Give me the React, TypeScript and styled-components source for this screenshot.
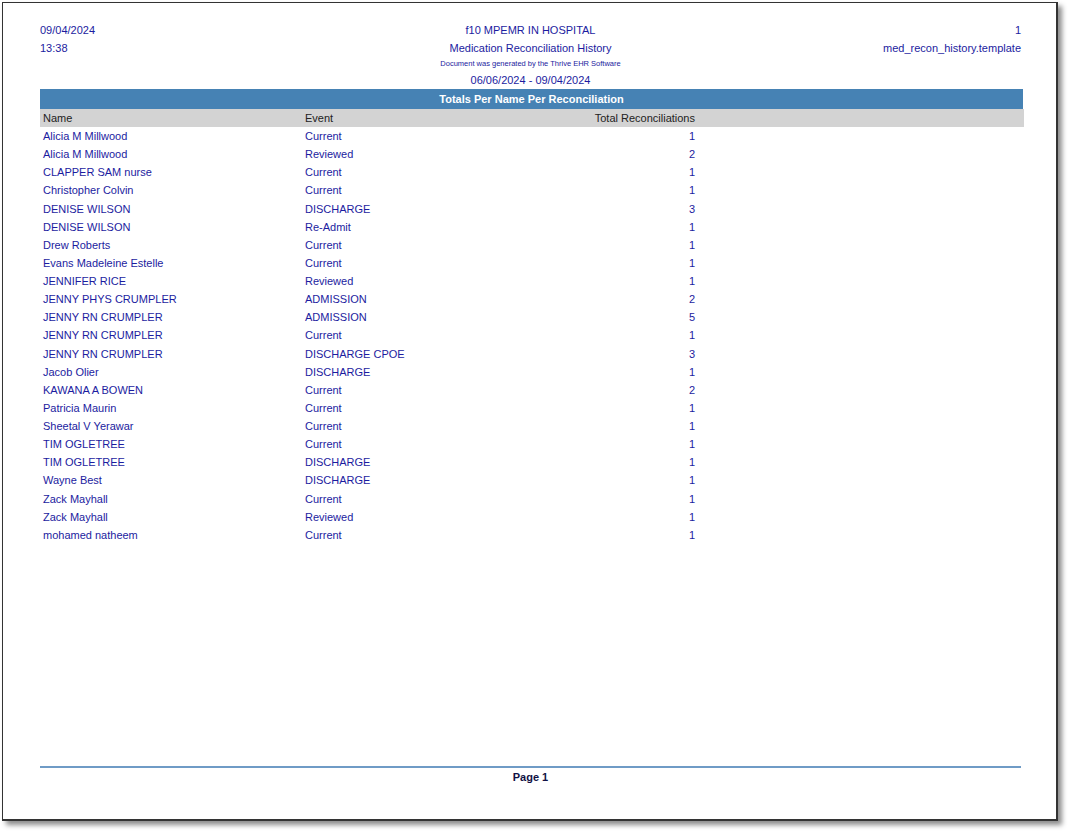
import React from "react";
import styled, { createGlobalStyle } from "styled-components";

const Global = createGlobalStyle`
  html, body { margin: 0; padding: 0; background: #fff; }
  body { font-family: "Liberation Sans", Arial, sans-serif; color: #1c1ca0; }
`;

const Frame = styled.div`
  width: 1072px; height: 836px; box-sizing: border-box; padding: 2px 14px 15px 2px;
`;
const Page = styled.div`
  height: 100%; box-sizing: border-box; border: 1px solid #333; border-right-width: 2px; border-bottom-width: 2px;
  box-shadow: 4px 4px 5px rgba(0,0,0,0.45); background: #fff;
  padding: 18px 35px 0 37px; display: flex; flex-direction: column; font-size: 11px;
`;
const Header = styled.div`
  display: grid; grid-template-columns: 1fr auto 1fr; align-items: start;
`;
const Col = styled.div<{ $align: string }>`
  display: flex; flex-direction: column; align-items: ${p => p.$align}; text-align: ${p => p.$align};
`;
const Line = styled.div<{ $h?: number; $size?: number }>`
  height: ${p => p.$h ?? 18}px; line-height: ${p => p.$h ?? 18}px; font-size: ${p => p.$size ?? 11}px; white-space: nowrap;
`;
const Bar = styled.div`
  margin-top: 0px; height: 20px; background: #4682b4; color: #fff; font-weight: bold; font-size: 11px;
  display: flex; align-items: center; justify-content: center; padding-left: 0; width: 983px;
`;
const Row = styled.div<{ $head?: boolean }>`
  display: grid; grid-template-columns: 262px 200px 190px 1fr; height: ${p => (p.$head ? 18 : 18.14)}px;
  align-items: center; background: ${p => (p.$head ? "#d3d3d3" : "transparent")}; width: 981px;
  color: ${p => (p.$head ? "#222" : "#1c1ca0")}; padding-left: 3px;
`;
const Num = styled.span`text-align: right;`;
const Spacer = styled.div`flex: 1;`;
const Footer = styled.div`
  border-top: 2px solid #6f9bc6; width: 981px; text-align: center; font-weight: bold; font-size: 11px;
  color: #111144; padding-top: 3px; margin-bottom: 36px;
`;

const rows: [string, string, number][] = [
  ["Alicia M Millwood", "Current", 1],
  ["Alicia M Millwood", "Reviewed", 2],
  ["CLAPPER SAM nurse", "Current", 1],
  ["Christopher Colvin", "Current", 1],
  ["DENISE WILSON", "DISCHARGE", 3],
  ["DENISE WILSON", "Re-Admit", 1],
  ["Drew Roberts", "Current", 1],
  ["Evans Madeleine Estelle", "Current", 1],
  ["JENNIFER RICE", "Reviewed", 1],
  ["JENNY PHYS CRUMPLER", "ADMISSION", 2],
  ["JENNY RN CRUMPLER", "ADMISSION", 5],
  ["JENNY RN CRUMPLER", "Current", 1],
  ["JENNY RN CRUMPLER", "DISCHARGE CPOE", 3],
  ["Jacob Olier", "DISCHARGE", 1],
  ["KAWANA A BOWEN", "Current", 2],
  ["Patricia Maurin", "Current", 1],
  ["Sheetal V Yerawar", "Current", 1],
  ["TIM OGLETREE", "Current", 1],
  ["TIM OGLETREE", "DISCHARGE", 1],
  ["Wayne Best", "DISCHARGE", 1],
  ["Zack Mayhall", "Current", 1],
  ["Zack Mayhall", "Reviewed", 1],
  ["mohamed natheem", "Current", 1],
];

export default function App() {
  return (
    <Frame>
      <Global />
      <Page>
        <Header>
          <Col $align="left">
            <Line>09/04/2024</Line>
            <Line>13:38</Line>
          </Col>
          <Col $align="center">
            <Line>f10 MPEMR IN HOSPITAL</Line>
            <Line>Medication Reconciliation History</Line>
            <Line $h={14} $size={7.5}>Document was generated by the Thrive EHR Software</Line>
            <Line $h={18}>06/06/2024 - 09/04/2024</Line>
          </Col>
          <Col $align="right">
            <Line>1</Line>
            <Line>med_recon_history.template</Line>
          </Col>
        </Header>
        <Bar>Totals Per Name Per Reconciliation</Bar>
        <Row $head>
          <span>Name</span><span>Event</span><Num>Total Reconciliations</Num><span />
        </Row>
        {rows.map((r, i) => (
          <Row key={i}>
            <span>{r[0]}</span><span>{r[1]}</span><Num>{r[2]}</Num><span />
          </Row>
        ))}
        <Spacer />
        <Footer>Page 1</Footer>
      </Page>
    </Frame>
  );
}
